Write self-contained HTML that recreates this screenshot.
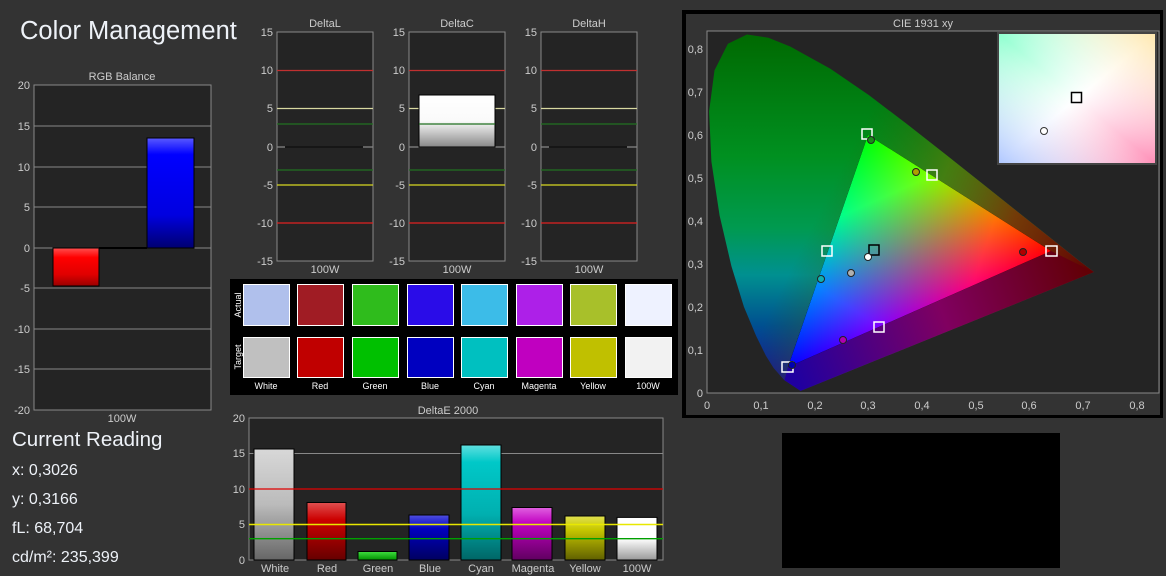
<!DOCTYPE html>
<html><head><meta charset="utf-8"><style>
html,body{margin:0;padding:0;background:#333;}
svg{display:block;font-family:"Liberation Sans",sans-serif;}
</style></head><body>
<svg width="1166" height="576" viewBox="0 0 1166 576" xmlns="http://www.w3.org/2000/svg">
<defs>
<linearGradient id="gR" x1="0" y1="0" x2="0" y2="1"><stop offset="0" stop-color="#ff5050"/><stop offset=".25" stop-color="#f00"/><stop offset=".7" stop-color="#e00000"/><stop offset="1" stop-color="#900"/></linearGradient>
<linearGradient id="gB" x1="0" y1="0" x2="0" y2="1"><stop offset="0" stop-color="#5a5aff"/><stop offset=".15" stop-color="#00f"/><stop offset=".7" stop-color="#0000e0"/><stop offset="1" stop-color="#000070"/></linearGradient>
<linearGradient id="gW" x1="0" y1="0" x2="0" y2="1"><stop offset="0" stop-color="#fff"/><stop offset=".5" stop-color="#fafafa"/><stop offset="1" stop-color="#888"/></linearGradient>
<linearGradient id="eW" x1="0" y1="0" x2="0" y2="1"><stop offset="0" stop-color="#d8d8d8"/><stop offset=".5" stop-color="#bbb"/><stop offset="1" stop-color="#666"/></linearGradient>
<linearGradient id="eR" x1="0" y1="0" x2="0" y2="1"><stop offset="0" stop-color="#e05050"/><stop offset=".3" stop-color="#c00"/><stop offset="1" stop-color="#600"/></linearGradient>
<linearGradient id="eG" x1="0" y1="0" x2="0" y2="1"><stop offset="0" stop-color="#40e040"/><stop offset="1" stop-color="#009000"/></linearGradient>
<linearGradient id="eB" x1="0" y1="0" x2="0" y2="1"><stop offset="0" stop-color="#5050e0"/><stop offset=".3" stop-color="#0000c0"/><stop offset="1" stop-color="#000060"/></linearGradient>
<linearGradient id="eC" x1="0" y1="0" x2="0" y2="1"><stop offset="0" stop-color="#60e0e0"/><stop offset=".15" stop-color="#00c8c8"/><stop offset=".6" stop-color="#00b0b0"/><stop offset="1" stop-color="#006666"/></linearGradient>
<linearGradient id="eM" x1="0" y1="0" x2="0" y2="1"><stop offset="0" stop-color="#e060e0"/><stop offset=".3" stop-color="#c000c0"/><stop offset="1" stop-color="#600060"/></linearGradient>
<linearGradient id="eY" x1="0" y1="0" x2="0" y2="1"><stop offset="0" stop-color="#e0e050"/><stop offset=".3" stop-color="#c8c800"/><stop offset="1" stop-color="#606000"/></linearGradient>
<linearGradient id="eH" x1="0" y1="0" x2="0" y2="1"><stop offset="0" stop-color="#fff"/><stop offset=".5" stop-color="#fff"/><stop offset="1" stop-color="#999"/></linearGradient>
<linearGradient id="loc" x1="0" y1="30" x2="0" y2="390" gradientUnits="userSpaceOnUse"><stop offset="0" stop-color="#006800"/><stop offset=".35" stop-color="#009020"/><stop offset=".55" stop-color="#009a50"/><stop offset=".68" stop-color="#009090"/><stop offset=".82" stop-color="#005090"/><stop offset="1" stop-color="#1800a0"/></linearGradient>
<linearGradient id="locR" x1="850" y1="150" x2="1094" y2="272" gradientUnits="userSpaceOnUse"><stop offset="0" stop-color="#3a5a00" stop-opacity="0"/><stop offset=".35" stop-color="#707000" stop-opacity=".6"/><stop offset=".65" stop-color="#803000" stop-opacity=".9"/><stop offset="1" stop-color="#600000" stop-opacity="1"/></linearGradient>
<linearGradient id="locP" x1="800" y1="390" x2="1100" y2="280" gradientUnits="userSpaceOnUse"><stop offset="0" stop-color="#2000a0"/><stop offset=".5" stop-color="#800060"/><stop offset="1" stop-color="#600000"/></linearGradient>
<linearGradient id="tR" x1="1051" y1="251" x2="852" y2="182" gradientUnits="userSpaceOnUse"><stop offset="0" stop-color="#ff0000"/><stop offset=".3" stop-color="#ff0000"/><stop offset="1" stop-color="#000"/></linearGradient>
<linearGradient id="tG" x1="868" y1="135" x2="941" y2="300" gradientUnits="userSpaceOnUse"><stop offset="0" stop-color="#00ff00"/><stop offset=".35" stop-color="#00ff00"/><stop offset="1" stop-color="#000"/></linearGradient>
<linearGradient id="tB" x1="788" y1="367" x2="916" y2="165" gradientUnits="userSpaceOnUse"><stop offset="0" stop-color="#0000ff"/><stop offset=".35" stop-color="#0000ff"/><stop offset="1" stop-color="#000"/></linearGradient>
<linearGradient id="in1" x1="0" y1="0" x2="1" y2="1"><stop offset="0" stop-color="#90ffd0"/><stop offset=".5" stop-color="#ffffff"/><stop offset="1" stop-color="#ff90b8"/></linearGradient>
<linearGradient id="in2" x1="0" y1="1" x2="1" y2="0"><stop offset="0" stop-color="#b0c8ff"/><stop offset=".5" stop-color="#ffffff" stop-opacity="0"/><stop offset="1" stop-color="#ffe8b0"/></linearGradient>
</defs>

<text x="20" y="39" font-size="25.5" fill="#eef2f8">Color Management</text>

<text x="122" y="80" font-size="11" fill="#ccc" text-anchor="middle">RGB Balance</text>
<rect x="34" y="85" width="177" height="325" fill="#242424" stroke="#888"/>
<g stroke="#888">
<line x1="34" y1="126" x2="211" y2="126"/><line x1="34" y1="167" x2="211" y2="167"/><line x1="34" y1="207" x2="211" y2="207"/><line x1="34" y1="248" x2="211" y2="248"/><line x1="34" y1="288" x2="211" y2="288"/><line x1="34" y1="329" x2="211" y2="329"/><line x1="34" y1="369" x2="211" y2="369"/>
</g>
<g font-size="11" fill="#ccc" text-anchor="end">
<text x="30" y="89">20</text><text x="30" y="130">15</text><text x="30" y="171">10</text><text x="30" y="211">5</text><text x="30" y="252">0</text><text x="30" y="292">-5</text><text x="30" y="333">-10</text><text x="30" y="373">-15</text><text x="30" y="414">-20</text>
</g>
<line x1="99" y1="248" x2="147" y2="248" stroke="#000" stroke-width="2"/>
<rect x="53" y="248" width="46" height="38" fill="url(#gR)" stroke="#000"/>
<rect x="147" y="138" width="47" height="110" fill="url(#gB)" stroke="#000"/>
<text x="122" y="422" font-size="11" fill="#ccc" text-anchor="middle">100W</text>

<text x="325" y="27" font-size="11" fill="#ccc" text-anchor="middle">DeltaL</text>
<rect x="277" y="32" width="96" height="229" fill="#242424" stroke="#888"/>
<text x="457" y="27" font-size="11" fill="#ccc" text-anchor="middle">DeltaC</text>
<rect x="409" y="32" width="96" height="229" fill="#242424" stroke="#888"/>
<text x="589" y="27" font-size="11" fill="#ccc" text-anchor="middle">DeltaH</text>
<rect x="541" y="32" width="96" height="229" fill="#242424" stroke="#888"/>
<g stroke-width="1.3">
<line x1="277" y1="70.5" x2="373" y2="70.5" stroke="#c03030"/><line x1="277" y1="108.5" x2="373" y2="108.5" stroke="#d8d8a0"/><line x1="277" y1="124" x2="373" y2="124" stroke="#207020"/><line x1="277" y1="147" x2="373" y2="147" stroke="#888"/><line x1="285" y1="147" x2="363" y2="147" stroke="#000"/><line x1="277" y1="170" x2="373" y2="170" stroke="#207020"/><line x1="277" y1="185" x2="373" y2="185" stroke="#d8d820"/><line x1="277" y1="223" x2="373" y2="223" stroke="#e02020"/>
<line x1="409" y1="70.5" x2="505" y2="70.5" stroke="#c03030"/><line x1="409" y1="108.5" x2="505" y2="108.5" stroke="#d8d8a0"/><line x1="409" y1="147" x2="505" y2="147" stroke="#888"/><line x1="409" y1="170" x2="505" y2="170" stroke="#207020"/><line x1="409" y1="185" x2="505" y2="185" stroke="#d8d820"/><line x1="409" y1="223" x2="505" y2="223" stroke="#e02020"/>
<line x1="541" y1="70.5" x2="637" y2="70.5" stroke="#c03030"/><line x1="541" y1="108.5" x2="637" y2="108.5" stroke="#d8d8a0"/><line x1="541" y1="124" x2="637" y2="124" stroke="#207020"/><line x1="541" y1="147" x2="637" y2="147" stroke="#888"/><line x1="549" y1="147" x2="627" y2="147" stroke="#000"/><line x1="541" y1="170" x2="637" y2="170" stroke="#207020"/><line x1="541" y1="185" x2="637" y2="185" stroke="#d8d820"/><line x1="541" y1="223" x2="637" y2="223" stroke="#e02020"/>
</g>
<rect x="419" y="95" width="76" height="52" fill="url(#gW)" stroke="#000"/>
<line x1="419" y1="124" x2="495" y2="124" stroke="#207020" stroke-width="1.3"/>
<g font-size="11" fill="#ccc" text-anchor="end">
<text x="273" y="36">15</text><text x="273" y="74">10</text><text x="273" y="112">5</text><text x="273" y="151">0</text><text x="273" y="189">-5</text><text x="273" y="227">-10</text><text x="273" y="265">-15</text>
<text x="405" y="36">15</text><text x="405" y="74">10</text><text x="405" y="112">5</text><text x="405" y="151">0</text><text x="405" y="189">-5</text><text x="405" y="227">-10</text><text x="405" y="265">-15</text>
<text x="537" y="36">15</text><text x="537" y="74">10</text><text x="537" y="112">5</text><text x="537" y="151">0</text><text x="537" y="189">-5</text><text x="537" y="227">-10</text><text x="537" y="265">-15</text>
</g>
<g font-size="11" fill="#ccc" text-anchor="middle"><text x="325" y="273">100W</text><text x="457" y="273">100W</text><text x="589" y="273">100W</text></g>

<rect x="230" y="279" width="448" height="116" fill="#000"/>
<text transform="translate(241,305) rotate(-90)" font-size="9" fill="#fff" text-anchor="middle">Actual</text>
<text transform="translate(241,357) rotate(-90)" font-size="9" fill="#fff" text-anchor="middle">Target</text>
<g stroke="#fff" stroke-width="1">
<rect x="243.5" y="284.5" width="46" height="41" fill="#b0c0ec"/><rect x="297.5" y="284.5" width="46" height="41" fill="#a01c24"/><rect x="352.5" y="284.5" width="46" height="41" fill="#2fbc1c"/><rect x="407.5" y="284.5" width="46" height="41" fill="#2a0ce8"/><rect x="461.5" y="284.5" width="46" height="41" fill="#3cbce8"/><rect x="516.5" y="284.5" width="46" height="41" fill="#ad20e8"/><rect x="570.5" y="284.5" width="46" height="41" fill="#a8c02a"/><rect x="625.5" y="284.5" width="46" height="41" fill="#eef2ff"/>
<rect x="243.5" y="337.5" width="46" height="40" fill="#c0c0c0"/><rect x="297.5" y="337.5" width="46" height="40" fill="#c00000"/><rect x="352.5" y="337.5" width="46" height="40" fill="#00c000"/><rect x="407.5" y="337.5" width="46" height="40" fill="#0000c0"/><rect x="461.5" y="337.5" width="46" height="40" fill="#00c0c0"/><rect x="516.5" y="337.5" width="46" height="40" fill="#c000c0"/><rect x="570.5" y="337.5" width="46" height="40" fill="#c0c000"/><rect x="625.5" y="337.5" width="46" height="40" fill="#f2f2f2"/>
</g>
<g font-size="9" fill="#fff" text-anchor="middle">
<text x="266" y="389">White</text><text x="320" y="389">Red</text><text x="375" y="389">Green</text><text x="430" y="389">Blue</text><text x="484" y="389">Cyan</text><text x="539" y="389">Magenta</text><text x="593" y="389">Yellow</text><text x="648" y="389">100W</text>
</g>

<text x="448" y="414" font-size="11" fill="#ccc" text-anchor="middle">DeltaE 2000</text>
<rect x="249" y="418" width="414" height="142" fill="#242424" stroke="#888"/>
<g stroke="#888"><line x1="249" y1="453.5" x2="663" y2="453.5"/><line x1="249" y1="524.5" x2="663" y2="524.5"/></g>
<g stroke="#000">
<rect x="254" y="449" width="40" height="111" fill="url(#eW)"/>
<rect x="307" y="502.5" width="39" height="57.5" fill="url(#eR)"/>
<rect x="358" y="551.5" width="39" height="8.5" fill="url(#eG)"/>
<rect x="409" y="515" width="40" height="45" fill="url(#eB)"/>
<rect x="461" y="445" width="40" height="115" fill="url(#eC)"/>
<rect x="512" y="507.5" width="40" height="52.5" fill="url(#eM)"/>
<rect x="565" y="516" width="40" height="44" fill="url(#eY)"/>
<rect x="617" y="517.4" width="40" height="42.6" fill="url(#eH)"/>
</g>
<line x1="249" y1="489" x2="663" y2="489" stroke="#e00000" stroke-width="1.3"/>
<line x1="249" y1="524.5" x2="663" y2="524.5" stroke="#e8e800" stroke-width="1.5"/>
<line x1="249" y1="538.7" x2="663" y2="538.7" stroke="#00a000" stroke-width="1.3"/>
<g font-size="11" fill="#ccc" text-anchor="end"><text x="245" y="422">20</text><text x="245" y="457">15</text><text x="245" y="493">10</text><text x="245" y="528">5</text><text x="245" y="564">0</text></g>
<g font-size="11" fill="#ccc" text-anchor="middle"><text x="275" y="572">White</text><text x="327" y="572">Red</text><text x="378" y="572">Green</text><text x="430" y="572">Blue</text><text x="481" y="572">Cyan</text><text x="533" y="572">Magenta</text><text x="585" y="572">Yellow</text><text x="637" y="572">100W</text></g>

<text x="12" y="446" font-size="20.5" fill="#eef2f8">Current Reading</text>
<g font-size="16" fill="#eef2f8"><text x="12" y="475">x: 0,3026</text><text x="12" y="504">y: 0,3166</text><text x="12" y="533">fL: 68,704</text><text x="12" y="562">cd/m²: 235,399</text></g>

<rect x="682" y="10" width="481" height="408" fill="#000"/>
<rect x="686" y="14" width="474" height="401" fill="#333"/>
<text x="923" y="27" font-size="11" fill="#ccc" text-anchor="middle">CIE 1931 xy</text>
<rect x="707" y="31" width="452" height="362" fill="#242424" stroke="#888"/>
<path d="M800.6,390.9 L784.4,380.2 773.7,368.1 765.9,355.7 756.1,335.9 743.9,306.7 731.4,266.1 719.6,215.5 711.4,161.5 709.1,111.4 714.5,70.4 727.9,43.8 747,34.5 768.4,37.7 790.2,46.5 830.4,68.7 869.1,95.3 907.5,124.5 945.7,154.5 982.5,183.8 1016.2,210.6 1044,232.8 1078.7,260.4 1094,272 Z" fill="url(#loc)"/>
<path d="M800.6,390.9 L784.4,380.2 773.7,368.1 765.9,355.7 756.1,335.9 743.9,306.7 731.4,266.1 719.6,215.5 711.4,161.5 709.1,111.4 714.5,70.4 727.9,43.8 747,34.5 768.4,37.7 790.2,46.5 830.4,68.7 869.1,95.3 907.5,124.5 945.7,154.5 982.5,183.8 1016.2,210.6 1044,232.8 1078.7,260.4 1094,272 Z" fill="url(#locR)"/>
<path d="M1094,272 L800.6,390.9 784.4,380.2 788,367 1051,251 Z" fill="url(#locP)"/>
<g style="isolation:isolate">
<polygon points="1051,251 868,135 788,367" fill="#000"/>
<polygon points="1051,251 868,135 788,367" fill="url(#tR)" style="mix-blend-mode:screen"/>
<polygon points="1051,251 868,135 788,367" fill="url(#tG)" style="mix-blend-mode:screen"/>
<polygon points="1051,251 868,135 788,367" fill="url(#tB)" style="mix-blend-mode:screen"/>
</g>
<g font-size="11" fill="#ccc" text-anchor="end">
<text x="703" y="53">0,8</text><text x="703" y="96">0,7</text><text x="703" y="139">0,6</text><text x="703" y="182">0,5</text><text x="703" y="225">0,4</text><text x="703" y="268">0,3</text><text x="703" y="311">0,2</text><text x="703" y="354">0,1</text><text x="703" y="397">0</text>
</g>
<g font-size="11" fill="#ccc" text-anchor="middle">
<text x="707" y="409">0</text><text x="761" y="409">0,1</text><text x="815" y="409">0,2</text><text x="868" y="409">0,3</text><text x="922" y="409">0,4</text><text x="976" y="409">0,5</text><text x="1029" y="409">0,6</text><text x="1083" y="409">0,7</text><text x="1137" y="409">0,8</text>
</g>
<rect x="997" y="32" width="160" height="133" fill="#444"/>
<rect x="999" y="34" width="156" height="129" fill="url(#in1)"/>
<rect x="999" y="34" width="156" height="129" fill="url(#in2)"/>
<rect x="1071.5" y="92.5" width="10" height="10" fill="none" stroke="#000" stroke-width="1.5"/>
<circle cx="1044" cy="131" r="3.5" fill="#fff" stroke="#333"/>
<g fill="none" stroke="#fff" stroke-width="1.5">
<rect x="862" y="129" width="10" height="10"/><rect x="927" y="170" width="10" height="10"/><rect x="1046" y="246" width="11" height="10"/><rect x="822" y="246" width="10" height="10"/><rect x="874" y="322" width="10" height="10"/><rect x="782" y="362" width="11" height="10"/>
<rect x="869" y="245" width="10" height="10" stroke="#000"/>
</g>
<g stroke="#222" stroke-width="1">
<circle cx="871" cy="140" r="3.5" fill="#1a8a1a"/><circle cx="916" cy="172" r="3.5" fill="#b0a000"/><circle cx="1023" cy="252" r="3.5" fill="#b00000"/><circle cx="868" cy="257" r="3.5" fill="#fff"/><circle cx="851" cy="273" r="3.5" fill="#b0b0b0"/><circle cx="821" cy="279" r="3.5" fill="#10b0b0"/><circle cx="843" cy="340" r="3.5" fill="#b000b0"/><circle cx="792" cy="365" r="3.5" fill="#0000b0"/>
</g>

<rect x="782" y="433" width="278" height="135" fill="#000"/>
</svg>
</body></html>
